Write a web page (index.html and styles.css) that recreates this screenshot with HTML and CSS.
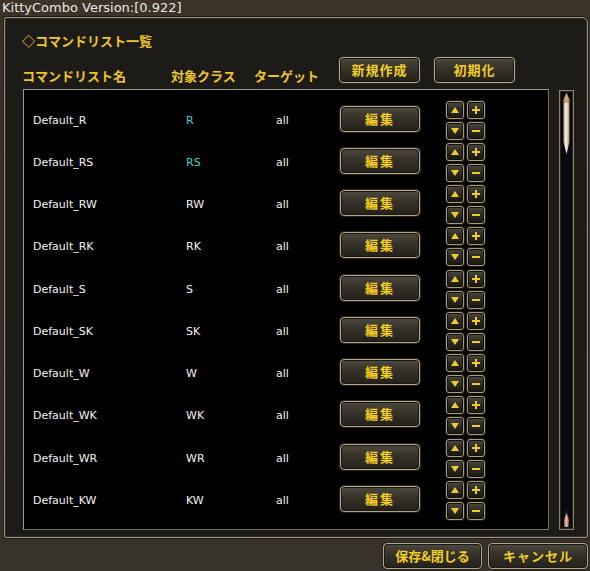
FILE: index.html
```html
<!DOCTYPE html>
<html lang="ja">
<head>
<meta charset="utf-8">
<title>KittyCombo</title>
<link rel="stylesheet" href="styles.css">
</head>
<body>
<div class="titlebar">KittyCombo Version:[0.922]</div>
<div class="panel">
  <div class="heading">◇コマンドリスト一覧</div>
  <div class="header">
    <span class="col col-name">コマンドリスト名</span>
    <span class="col col-class">対象クラス</span>
    <span class="col col-target">ターゲット</span>
    <button class="btn btn-top btn-new">新規作成</button>
    <button class="btn btn-top">初期化</button>
  </div>
  <div class="listarea">
    <div class="list">
      <div class="row"><span class="name">Default_R</span><span class="cls cyan">R</span><span class="tgt">all</span><button class="btn btn-edit">編集</button><div class="arrows"><span class="ab"><svg viewBox="0 0 10 10"><polygon points="5,2 9,8 1,8"/></svg></span><span class="ab"><svg viewBox="0 0 10 10"><rect x="4" y="1" width="2" height="8"/><rect x="1" y="4" width="8" height="2"/></svg></span><span class="ab"><svg viewBox="0 0 10 10"><polygon points="1,2 9,2 5,8"/></svg></span><span class="ab"><svg viewBox="0 0 10 10"><rect x="1" y="4" width="8" height="2"/></svg></span></div></div>
      <div class="row"><span class="name">Default_RS</span><span class="cls cyan">RS</span><span class="tgt">all</span><button class="btn btn-edit">編集</button><div class="arrows"><span class="ab"><svg viewBox="0 0 10 10"><polygon points="5,2 9,8 1,8"/></svg></span><span class="ab"><svg viewBox="0 0 10 10"><rect x="4" y="1" width="2" height="8"/><rect x="1" y="4" width="8" height="2"/></svg></span><span class="ab"><svg viewBox="0 0 10 10"><polygon points="1,2 9,2 5,8"/></svg></span><span class="ab"><svg viewBox="0 0 10 10"><rect x="1" y="4" width="8" height="2"/></svg></span></div></div>
      <div class="row"><span class="name">Default_RW</span><span class="cls">RW</span><span class="tgt">all</span><button class="btn btn-edit">編集</button><div class="arrows"><span class="ab"><svg viewBox="0 0 10 10"><polygon points="5,2 9,8 1,8"/></svg></span><span class="ab"><svg viewBox="0 0 10 10"><rect x="4" y="1" width="2" height="8"/><rect x="1" y="4" width="8" height="2"/></svg></span><span class="ab"><svg viewBox="0 0 10 10"><polygon points="1,2 9,2 5,8"/></svg></span><span class="ab"><svg viewBox="0 0 10 10"><rect x="1" y="4" width="8" height="2"/></svg></span></div></div>
      <div class="row"><span class="name">Default_RK</span><span class="cls">RK</span><span class="tgt">all</span><button class="btn btn-edit">編集</button><div class="arrows"><span class="ab"><svg viewBox="0 0 10 10"><polygon points="5,2 9,8 1,8"/></svg></span><span class="ab"><svg viewBox="0 0 10 10"><rect x="4" y="1" width="2" height="8"/><rect x="1" y="4" width="8" height="2"/></svg></span><span class="ab"><svg viewBox="0 0 10 10"><polygon points="1,2 9,2 5,8"/></svg></span><span class="ab"><svg viewBox="0 0 10 10"><rect x="1" y="4" width="8" height="2"/></svg></span></div></div>
      <div class="row"><span class="name">Default_S</span><span class="cls">S</span><span class="tgt">all</span><button class="btn btn-edit">編集</button><div class="arrows"><span class="ab"><svg viewBox="0 0 10 10"><polygon points="5,2 9,8 1,8"/></svg></span><span class="ab"><svg viewBox="0 0 10 10"><rect x="4" y="1" width="2" height="8"/><rect x="1" y="4" width="8" height="2"/></svg></span><span class="ab"><svg viewBox="0 0 10 10"><polygon points="1,2 9,2 5,8"/></svg></span><span class="ab"><svg viewBox="0 0 10 10"><rect x="1" y="4" width="8" height="2"/></svg></span></div></div>
      <div class="row"><span class="name">Default_SK</span><span class="cls">SK</span><span class="tgt">all</span><button class="btn btn-edit">編集</button><div class="arrows"><span class="ab"><svg viewBox="0 0 10 10"><polygon points="5,2 9,8 1,8"/></svg></span><span class="ab"><svg viewBox="0 0 10 10"><rect x="4" y="1" width="2" height="8"/><rect x="1" y="4" width="8" height="2"/></svg></span><span class="ab"><svg viewBox="0 0 10 10"><polygon points="1,2 9,2 5,8"/></svg></span><span class="ab"><svg viewBox="0 0 10 10"><rect x="1" y="4" width="8" height="2"/></svg></span></div></div>
      <div class="row"><span class="name">Default_W</span><span class="cls">W</span><span class="tgt">all</span><button class="btn btn-edit">編集</button><div class="arrows"><span class="ab"><svg viewBox="0 0 10 10"><polygon points="5,2 9,8 1,8"/></svg></span><span class="ab"><svg viewBox="0 0 10 10"><rect x="4" y="1" width="2" height="8"/><rect x="1" y="4" width="8" height="2"/></svg></span><span class="ab"><svg viewBox="0 0 10 10"><polygon points="1,2 9,2 5,8"/></svg></span><span class="ab"><svg viewBox="0 0 10 10"><rect x="1" y="4" width="8" height="2"/></svg></span></div></div>
      <div class="row"><span class="name">Default_WK</span><span class="cls">WK</span><span class="tgt">all</span><button class="btn btn-edit">編集</button><div class="arrows"><span class="ab"><svg viewBox="0 0 10 10"><polygon points="5,2 9,8 1,8"/></svg></span><span class="ab"><svg viewBox="0 0 10 10"><rect x="4" y="1" width="2" height="8"/><rect x="1" y="4" width="8" height="2"/></svg></span><span class="ab"><svg viewBox="0 0 10 10"><polygon points="1,2 9,2 5,8"/></svg></span><span class="ab"><svg viewBox="0 0 10 10"><rect x="1" y="4" width="8" height="2"/></svg></span></div></div>
      <div class="row"><span class="name">Default_WR</span><span class="cls">WR</span><span class="tgt">all</span><button class="btn btn-edit">編集</button><div class="arrows"><span class="ab"><svg viewBox="0 0 10 10"><polygon points="5,2 9,8 1,8"/></svg></span><span class="ab"><svg viewBox="0 0 10 10"><rect x="4" y="1" width="2" height="8"/><rect x="1" y="4" width="8" height="2"/></svg></span><span class="ab"><svg viewBox="0 0 10 10"><polygon points="1,2 9,2 5,8"/></svg></span><span class="ab"><svg viewBox="0 0 10 10"><rect x="1" y="4" width="8" height="2"/></svg></span></div></div>
      <div class="row"><span class="name">Default_KW</span><span class="cls">KW</span><span class="tgt">all</span><button class="btn btn-edit">編集</button><div class="arrows"><span class="ab"><svg viewBox="0 0 10 10"><polygon points="5,2 9,8 1,8"/></svg></span><span class="ab"><svg viewBox="0 0 10 10"><rect x="4" y="1" width="2" height="8"/><rect x="1" y="4" width="8" height="2"/></svg></span><span class="ab"><svg viewBox="0 0 10 10"><polygon points="1,2 9,2 5,8"/></svg></span><span class="ab"><svg viewBox="0 0 10 10"><rect x="1" y="4" width="8" height="2"/></svg></span></div></div>
    </div>
    <div class="scroll">
      <svg width="15" height="440" viewBox="0 0 15 440">
        <defs>
          <linearGradient id="shaft" x1="0" x2="1" y1="0" y2="0">
            <stop offset="0" stop-color="#b8a488"/>
            <stop offset="0.45" stop-color="#fbf4e6"/>
            <stop offset="1" stop-color="#a08a6c"/>
          </linearGradient>
          <linearGradient id="tip" x1="0" x2="1" y1="0" y2="0">
            <stop offset="0" stop-color="#9a6a40"/>
            <stop offset="0.5" stop-color="#e0b080"/>
            <stop offset="1" stop-color="#8a5a34"/>
          </linearGradient>
          <linearGradient id="btip" x1="0" x2="1" y1="0" y2="0">
            <stop offset="0" stop-color="#b07060"/>
            <stop offset="0.5" stop-color="#f0b8a0"/>
            <stop offset="1" stop-color="#905848"/>
          </linearGradient>
        </defs>
        <rect x="0.5" y="0.5" width="14" height="439" fill="#07070f" stroke="#8c8068"/>
        <rect x="1.5" y="1.5" width="12" height="437" fill="none" stroke="#2a261e"/>
        <polygon points="7.5,3 11,10 10.5,13 4.5,13 4,10" fill="url(#tip)"/>
        <path d="M4.5,13 L10.5,13 L10.5,52 L7.5,64 L4.5,52 Z" fill="url(#shaft)"/>
        <polygon points="7.5,416 5,426 5.5,436 9.5,436 10,426" fill="#1a1410"/>
        <polygon points="7.5,423 5,430 5.5,437 9.5,437 10,430" fill="url(#btip)"/>
      </svg>
    </div>
  </div>
</div>
<div class="footer">
  <button class="btn btn-foot">保存&amp;閉じる</button>
  <button class="btn btn-foot btn-cancel">キャンセル</button>
</div>
</body>
</html>
```

FILE: styles.css
```css
* { box-sizing: border-box; }

html, body {
  margin: 0;
  padding: 0;
}

body {
  width: 590px;
  height: 571px;
  overflow: hidden;
  background: linear-gradient(180deg, #3d3228 0%, #382e26 40%, #37312c 100%);
  font-family: "DejaVu Sans", "Noto Sans CJK JP", sans-serif;
}

.titlebar {
  height: 17px;
  padding-left: 2px;
  font-family: "DejaVu Sans", sans-serif;
  font-size: 13px;
  line-height: 15px;
  color: #ece8e0;
  white-space: nowrap;
}

.panel {
  width: 584px;
  height: 521px;
  margin-left: 4px;
  border: 1px solid #9a917f;
  border-radius: 2px 6px 2px 2px;
  background: #1d1b18;
  box-shadow: 0 0 0 1px #221d17, inset 0 0 0 1px #2e2a24;
  padding: 14px 13px 7px 18px;
  display: flex;
  flex-direction: column;
}

.heading {
  height: 18px;
  line-height: 18px;
  margin-left: -1px;
  font-family: "Noto Sans CJK JP", sans-serif;
  font-weight: 700;
  font-size: 13px;
  color: #eec52a;
}

.header {
  margin-top: 7px;
  height: 26px;
  display: flex;
  align-items: center;
}

.col {
  align-self: flex-end;
  font-family: "Noto Sans CJK JP", sans-serif;
  font-weight: 700;
  font-size: 13px;
  line-height: 14px;
  color: #eec52a;
  white-space: nowrap;
}

.col-name { width: 149px; margin-left: -1px; }
.col-class { width: 83px; }
.col-target { width: 85px; }

.btn {
  padding: 0;
  margin: 0;
  border: 1px solid #b2a68a;
  border-radius: 4px;
  background: linear-gradient(180deg, #4d493e 0%, #35322a 45%, #24211c 100%);
  box-shadow: 0 0 0 1px #2a251c, inset 0 0 0 1px #1b1914;
  color: #f3cd22;
  font-family: "Noto Sans CJK JP", sans-serif;
  font-weight: 700;
  font-size: 13px;
  line-height: 20px;
  letter-spacing: 1px;
  text-align: center;
  white-space: nowrap;
}

.btn-top {
  width: 81px;
  height: 26px;
}

.btn-new { margin-right: 14px; }

.listarea {
  margin-top: 6px;
  height: 441px;
  display: flex;
  align-items: flex-start;
}

.list {
  width: 526px;
  height: 441px;
  background: #000;
  border: 1px solid #77705f;
  border-top-color: #a09888;
  border-left-color: #a09888;
  padding-top: 9px;
  overflow: hidden;
}

.row {
  height: 42.25px;
  display: flex;
  align-items: center;
  padding-left: 9px;
  font-family: "DejaVu Sans", sans-serif;
  font-size: 11px;
  color: #f4f4f4;
}

.name { width: 153px; }
.cls { width: 90px; }
.tgt { width: 64px; }
.cyan { color: #44d2cc; }

.btn-edit {
  width: 80px;
  height: 26px;
  letter-spacing: 2px;
  margin-top: -3px;
}

.arrows {
  margin-left: 26px;
  display: grid;
  grid-template-columns: 18px 18px;
  grid-template-rows: 18px 18px;
  gap: 3px;
}

.ab {
  display: flex;
  align-items: center;
  justify-content: center;
  width: 18px;
  height: 18px;
  border: 1px solid #a89c7f;
  border-radius: 3px;
  background: linear-gradient(180deg, #4a473e 0%, #2c2a24 50%, #17160f 100%);
  box-shadow: 0 0 0 1px #1c1812, inset 0 0 0 1px #12110d;
}

.ab svg {
  width: 10px;
  height: 10px;
  fill: #f0cc2a;
}

.scroll {
  margin-left: 10px;
  margin-top: 1px;
  width: 15px;
  height: 440px;
}

.scroll svg { display: block; }

.footer {
  margin-top: 5px;
  display: flex;
  justify-content: flex-end;
  gap: 6px;
  padding-right: 2px;
}

.btn-foot {
  width: 99px;
  height: 26px;
  letter-spacing: 0;
}

.btn-cancel {
  width: 100px;
  letter-spacing: 1px;
}
```
